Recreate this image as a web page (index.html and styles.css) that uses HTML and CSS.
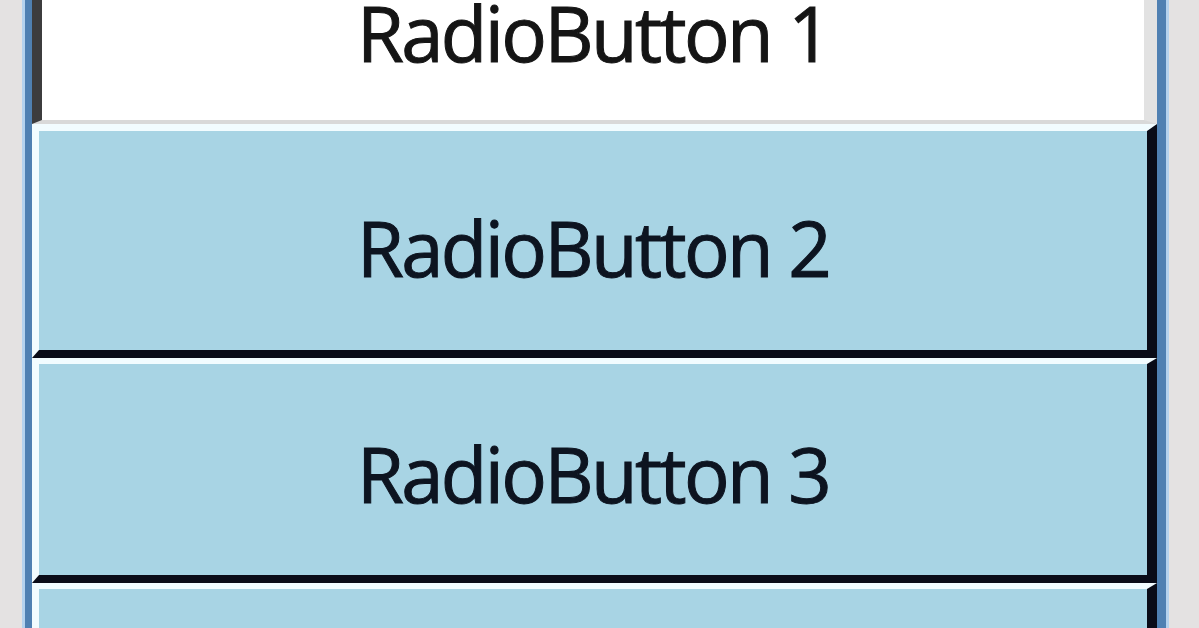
FILE: index.html
```html
<!DOCTYPE html>
<html lang="en">
<head>
<meta charset="utf-8">
<title>RadioButtons</title>
<link rel="stylesheet" href="styles.css">
</head>
<body>
<div class="frame">
  <div class="group">
    <div class="rb rb-checked"><span class="label">RadioButton 1</span></div>
    <div class="rb rb-2"><span class="label">RadioButton 2</span></div>
    <div class="rb rb-3"><span class="label">RadioButton 3</span></div>
    <div class="rb rb-4"></div>
  </div>
</div>
</body>
</html>
```
FILE: styles.css
```css
html, body {
  margin: 0;
  padding: 0;
}
body {
  width: 1199px;
  height: 628px;
  overflow: hidden;
  background: #e4e2e2;
  font-family: "Open Sans", "Noto Sans", sans-serif;
}
.frame {
  margin-left: 22px;
  width: 1147px;
  height: 628px;
  box-sizing: border-box;
  border-left: 3px solid #b4d2ee;
  border-right: 3px solid #b4d2ee;
  overflow: hidden;
}
.group {
  height: 100%;
  box-sizing: border-box;
  border-left: 7px solid #4f80b2;
  border-right: 9px solid #4f80b2;
  display: flex;
  flex-direction: column;
}
.rb {
  flex: none;
  box-sizing: border-box;
  display: flex;
  align-items: center;
  justify-content: center;
  background: #a8d4e4;
  border-top: 7px solid #f2fcff;
  border-left: 7px solid #f2fcff;
  border-bottom: 8px solid #0a0c18;
  border-right: 10px solid #0a0c18;
  color: #0d1420;
}
.label {
  font-size: 76px;
  line-height: 1;
  letter-spacing: -2.6px;
  white-space: nowrap;
  -webkit-text-stroke: 1px currentColor;
}
.rb-checked {
  height: 124px;
  background: #ffffff;
  border-top: none;
  border-left: 10px solid #3c3c3e;
  border-right: 13px solid #e2e2e2;
  border-bottom: 4px solid #d9d9d9;
  align-items: flex-start;
  padding-top: 3px;
  color: #151515;
}
.rb-checked .label {
  line-height: 0.8;
}
.rb-2 {
  height: 234px;
  padding-top: 14px;
}
.rb-3 {
  height: 225px;
  padding-top: 8px;
  border-top-width: 6px;
}
.rb-4 {
  height: 225px;
  border-top-width: 6px;
}
```
